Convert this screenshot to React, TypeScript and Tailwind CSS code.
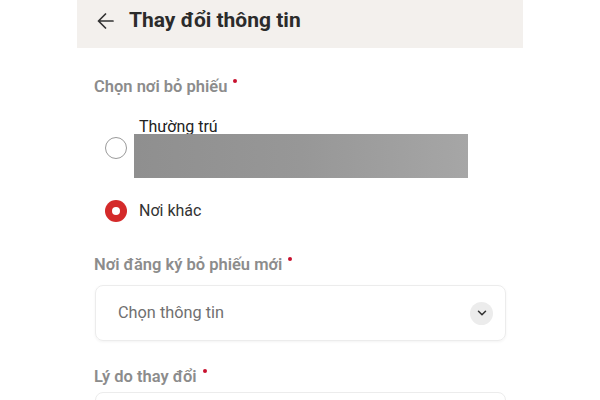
import React from "react";
import { ChevronDown } from "lucide-react";

const Label = ({ text, className = "" }: { text: string; className?: string }) => (
  <div className={`flex items-start h-6 text-[16.5px] leading-6 font-semibold text-[#8c8c8c] ${className}`}>
    <span>{text}</span>
    <span className="ml-[6px] mt-[4px] w-[4px] h-[4px] rounded-full bg-[#c8102e]" />
  </div>
);

const App = () => {
  return (
    <div className="w-full h-[400px] bg-white flex justify-center overflow-hidden font-['Roboto',sans-serif]">
      <div className="w-[446px] flex flex-col">
        {/* Header */}
        <div className="h-12 shrink-0 bg-[#f3f0ed] flex items-center pl-5 pb-[7px] gap-[15px]">
          <svg width="17" height="16" viewBox="0 0 17 16" fill="none" stroke="#333" strokeWidth="1.7" strokeLinecap="round" strokeLinejoin="round">
            <path d="M16 8H1.5M8.5 1L1.5 8L8.5 15" />
          </svg>
          <h1 className="text-[21px] font-bold text-[#2b2b2b] leading-none">Thay đổi thông tin</h1>
        </div>

        {/* Form */}
        <div className="px-[17px] flex flex-col">
          <Label text="Chọn nơi bỏ phiếu" className="mt-[27px]" />

          <div className="mt-[18px] flex items-center pl-[11px]">
            <span className="w-[22px] h-[22px] shrink-0 rounded-full border-[1.5px] border-[#9a9a9a] bg-white" />
            <div className="ml-[7px] flex flex-col">
              <span className="pl-[5px] text-[16px] leading-5 text-[#222]">Thường trú</span>
              <div className="-mt-[3px] w-[334px] h-[44px] bg-gradient-to-r from-[#8f8f8f] via-[#979797] to-[#a6a6a6]" />
            </div>
          </div>

          <div className="mt-[21px] h-6 flex items-center pl-[11px]">
            <span className="w-[22px] h-[22px] shrink-0 rounded-full bg-[#d42a2a] flex items-center justify-center">
              <span className="w-[8px] h-[8px] rounded-full bg-white" />
            </span>
            <span className="ml-[12px] text-[16px] text-[#333]">Nơi khác</span>
          </div>

          <Label text="Nơi đăng ký bỏ phiếu mới" className="mt-[30px]" />

          <div className="mt-2 h-14 ml-px rounded-lg border border-[#ececec] shadow-[0_1px_3px_rgba(0,0,0,0.05)] flex items-center justify-between pl-[22px] pr-[12px]">
            <span className="text-[16.3px] text-[#707070]">Chọn thông tin</span>
            <span className="w-[23px] h-[23px] rounded-full bg-[#ececec] flex items-center justify-center">
              <ChevronDown size={14} strokeWidth={2.6} className="text-[#333]" />
            </span>
          </div>

          <Label text="Lý do thay đổi" className="mt-6" />

          <div className="mt-[3px] h-14 ml-px rounded-lg border border-[#ececec]" />
        </div>
      </div>
    </div>
  );
};

export default App;
